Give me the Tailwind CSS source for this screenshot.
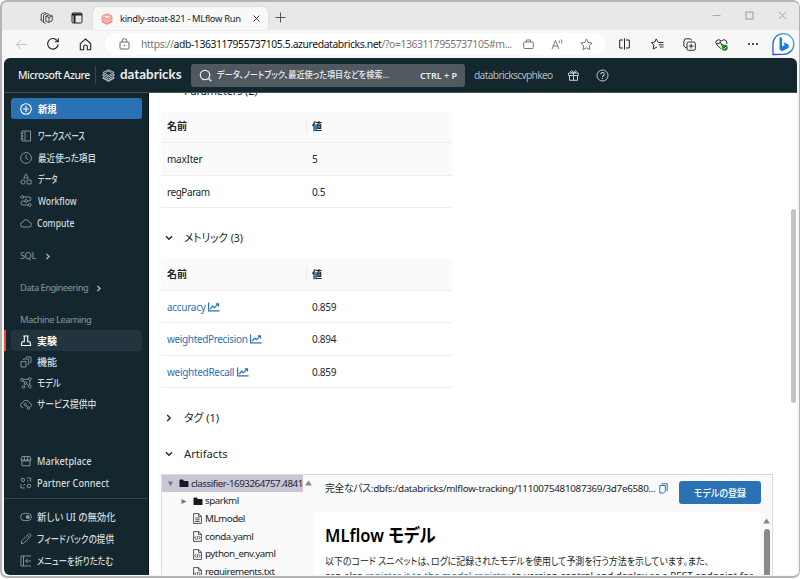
<!DOCTYPE html>
<html lang="ja">
<head>
<meta charset="utf-8">
<title>kindly-stoat-821 - MLflow Run</title>
<script src="https://cdn.jsdelivr.net/npm/@tailwindcss/browser@4"></script>
</head>
<body class="h-[579px] w-[800px] overflow-hidden bg-white font-['Noto_Sans','Noto_Sans_CJK_JP',sans-serif] text-[11px] leading-none text-[#20272b] [font-feature-settings:'palt']">
<svg class="hidden">
  <symbol id="stack" viewBox="0 0 14 14"><path d="M1 3.8 7 .8l6 3-6 3.1zM1 5.5l6 3.1 6-3.1M1 5.5v1.9l6 3.1 6-3.1V5.6M1 9.1l6 3.2 6-3.2M1 9.1v.9l6 3.3 6-3.3v-.9M4 3.8l3-1.5 3 1.5" fill="none" stroke="currentColor" stroke-width=".85"/></symbol>
  <symbol id="chart" viewBox="0 0 12 10"><path d="M.6.5v8.4h11M2.2 7l2.5-2.8 1.8 1.5L10 2.2M7.8 1.8h2.7v2.7" fill="none" stroke="currentColor" stroke-width="1.2"/></symbol>
  <symbol id="down" viewBox="0 0 8 6"><path d="m1 1.2 3 3 3-3" fill="none" stroke="currentColor" stroke-width="1.4"/></symbol>
  <symbol id="right" viewBox="0 0 6 8"><path d="m1.2 1 3 3-3 3" fill="none" stroke="currentColor" stroke-width="1.4"/></symbol>
  <symbol id="folder" viewBox="0 0 10 9"><path d="M.5 1.5q0-.9.9-.9h2.4l1.2 1.3h3.6q.9 0 .9.9v4.4q0 .9-.9.9H1.4q-.9 0-.9-.9z" fill="#171b1e"/></symbol>
  <symbol id="code" viewBox="0 0 9 11"><path d="M.6.6h5.2l2.6 2.6v7.2H.6zM5.6.8v2.6h2.6M3 5.2 1.8 6.8 3 8.4M6 5.2l1.2 1.6L6 8.4M5 4.8 4 8.8" fill="none" stroke="#35393c" stroke-width=".85"/></symbol>
</svg>
<div class="flex h-[578px] w-[800px] flex-col overflow-hidden rounded-[7px] border-2 border-r border-[#b4b4b4] bg-[#f7f7f7]">

  <div class="flex h-[28px] shrink-0 items-end bg-[#e8e8e8]">
    <div class="flex h-[24px] w-[91px] shrink-0 items-center gap-[18px] pl-[38px] text-[#222]">
      <svg class="mt-px size-[13px]" viewBox="0 0 13 13" fill="none" stroke="currentColor" stroke-width=".8"><path d="M5.8 4.3 9 2.8l3.2 1.1v4.8L9 10.4 5.8 9.3zM5.8 4.3 9 5.4l3.2-1.5M9 5.4v5M3.5 9V3.2L6.7 1.6l2 .6M1.2 8V2.3L4.3.7l2 .5M5.8 11.4l-2.3-.9V9M3 9.4 1.2 8.6V7"/></svg>
      <svg class="size-[12px]" viewBox="0 0 12 12" fill="none" stroke="currentColor"><rect x="1" y="1" width="10" height="10" rx="1.3"/><path d="M1 2.5h10M3.5 3v8" stroke-width="2"/></svg>
    </div>
    <div class="flex h-[23px] w-[175px] shrink-0 items-center rounded-t-[5px] bg-[#f8f8f8] pl-[8px] shadow-[0_0_1px_#999]">
      <svg class="size-[12px] shrink-0 text-[#ff5141]"><use href="#stack"/></svg>
      <span class="ml-[7px] text-[9.4px] tracking-[-0.33px] whitespace-nowrap">kindly-stoat-821 - MLflow Run</span>
      <svg class="mr-[7px] ml-auto size-[9px] shrink-0" viewBox="0 0 9 9"><path d="m1.5 1.5 6 6m0-6-6 6" stroke="#222" stroke-width=".9"/></svg>
    </div>
    <svg class="mb-[7px] ml-[7px] size-[11px]" viewBox="0 0 11 11"><path d="M5.5.5v10m-5-5h10" stroke="#444" stroke-width=".9"/></svg>
    <div class="mr-[12px] mb-[10px] ml-auto flex items-center gap-[24px]">
      <svg class="size-[9px]" viewBox="0 0 9 9"><path d="M.5 4.5h8" stroke="#aaa"/></svg>
      <svg class="size-[9px]" viewBox="0 0 9 9"><rect x="1" y="1" width="7" height="7" fill="none" stroke="#999"/></svg>
      <svg class="size-[9px]" viewBox="0 0 9 9"><path d="m1 1 7 7m0-7-7 7" stroke="#999" stroke-width=".9"/></svg>
    </div>
  </div>

  <div class="flex h-[28px] shrink-0 items-center text-[#222] [&_svg]:shrink-0">
    <svg class="ml-[13px] size-[13px]" viewBox="0 0 13 13" fill="none" stroke="#c4c4c4"><path d="M12 6.5H1.5M6 2 1.5 6.5 6 11"/></svg>
    <svg class="ml-[18px] size-[14px]" viewBox="0 0 14 14" fill="none" stroke="currentColor" stroke-width="1.1"><path d="M12.2 7.4A5.3 5.3 0 1 1 10.9 3.3L12.3 4.8M12.3 1.2v3.6H8.8"/></svg>
    <svg class="ml-[19px] size-[13px]" viewBox="0 0 13 13" fill="none" stroke="currentColor" stroke-width="1.1"><path d="M1.3 5.6 6.5 1l5.2 4.6v6.2H8.3V8.3q0-1-1-1H5.7q-1 0-1 1v3.5H1.3z"/></svg>
    <div class="ml-[13px] flex h-[22px] w-[500px] shrink-0 items-center rounded-full bg-white text-[#666]">
      <svg class="ml-[14px] h-[12px] w-[11px]" viewBox="0 0 11 12" fill="none" stroke="currentColor"><rect x="1" y="4" width="9" height="7" rx="1"/><path d="M3.3 4V2.8a2.2 2.2 0 0 1 4.4 0V4"/><circle cx="5.5" cy="7.5" r=".5"/></svg>
      <span class="ml-[11px] w-[373px] shrink-0 text-[10.4px] tracking-[-0.41px] whitespace-nowrap text-[#777]">https://<span class="text-[#151515]">adb-1363117955737105.5.azuredatabricks.net</span>/?o=1363117955737105#m...</span>
      <svg class="ml-[9px] size-[11px]" viewBox="0 0 11 11" fill="none" stroke="currentColor" stroke-width=".9"><rect x=".7" y="3" width="9.6" height="6.5" rx="1"/><path d="M3.4 3V1h4.2v2"/></svg>
      <svg class="ml-[17px] h-[11px] w-[13px]" viewBox="0 0 13 11" fill="none" stroke="currentColor" stroke-width=".9"><path d="m1 10 3.4-8.5L8 10M2.3 7h4.3M8 1.5q1 1 .4 2.5M10 .5q1.8 1.7.5 4"/></svg>
      <svg class="ml-[16px] size-[13px]" viewBox="0 0 13 13" fill="none" stroke="currentColor" stroke-width=".9"><path d="m6.5 1 1.7 3.5 3.9.5-2.8 2.7.6 3.9-3.4-1.8-3.4 1.8.6-3.9L.9 5l3.9-.5z"/></svg>
    </div>
    <svg class="ml-[14px] h-[12px] w-[11px]" viewBox="0 0 11 12" fill="none" stroke="currentColor"><path d="M4 2H.7v8H4M7 2h3.3v8H7M5.5.5v11"/></svg>
    <svg class="ml-[21px] h-[12px] w-[13px]" viewBox="0 0 13 12" fill="none" stroke="currentColor" stroke-width=".95"><path d="M7 4 5.2.9 3.7 4l-3.2.6L2.9 7l-.6 4L6 9M7.3 4.5h5.2M7.8 6.8h4.7M8.8 9h3.7"/></svg>
    <svg class="ml-[19px] size-[13px]" viewBox="0 0 13 13" fill="none" stroke="currentColor" stroke-width=".95"><rect x="4" y="4" width="8.3" height="8.3" rx="1.5"/><path d="M8.1 5.8v4.7M5.8 8.1h4.7M4 9.8H3L.8 8 1 3q0-2.2 2.2-2.2H7l2 1.5"/></svg>
    <svg class="ml-[19px] size-[13px]" viewBox="0 0 13 13" fill="none" stroke="currentColor" stroke-width=".95"><path d="M6.2 11 1.5 6.4Q0 4.3 1.5 2.6 3.8.5 6.3 3q2.5-2.5 4.8-.4 1.4 1.5.3 3.4M1 5.7h3l1.2-2 1.7 3.8L8.2 6"/><circle cx="9.7" cy="9.7" r="3" fill="#17851b" stroke="none"/><path d="m8.3 9.8 1 1L11 9" stroke="#fff" stroke-width=".8"/></svg>
    <svg class="ml-[19px] h-[4px] w-[12px]" viewBox="0 0 12 4"><circle cx="2" cy="2" r=".9"/><circle cx="6" cy="2" r=".9"/><circle cx="10" cy="2" r=".9"/></svg>
    <svg class="ml-[12px] size-[24px]" viewBox="0 0 24 24"><defs><linearGradient id="bl" x1="1" y1="0" x2="0" y2="1"><stop stop-color="#53c2e8"/><stop offset=".5" stop-color="#1979cf"/><stop offset="1" stop-color="#3649d4"/></linearGradient></defs><path d="M2 22.5V12A10.4 10.4 0 1 1 12.5 22.4Z" fill="#fff" stroke="url(#bl)" stroke-width="1.3"/><path d="m8.5 5 2.6 1v8.6l2.6-1.5-1.4-3 4.7 2.1q2 2.6-.4 4.4L11 19.2l-2.5-1.6z" fill="#1b7de0"/></svg>
  </div>

  <div class="ml-[2px] flex h-[517px] w-[793px] shrink-0 flex-col overflow-hidden rounded-[6px] bg-white">
    <header class="flex h-[35px] shrink-0 items-center border-b border-[#465159] bg-[#14262e] text-[#e9edef] [&_svg]:shrink-0">
      <span class="ml-[14px] w-[77px] shrink-0 text-[10.4px] font-medium tracking-[-0.42px] whitespace-nowrap">Microsoft Azure</span>
      <i class="h-[18px] w-px bg-[#34454d]"></i>
      <svg class="ml-[6px] size-[13px]"><use href="#stack"/></svg>
      <span class="ml-[5px] w-[63px] shrink-0 font-['Lato'] text-[13.4px] font-bold">databricks</span>
      <div class="ml-[8px] flex h-[23px] w-[274px] shrink-0 items-center rounded-[3px] bg-[#50595f]">
        <svg class="ml-[8px] size-[13px]" viewBox="0 0 13 13" fill="none" stroke="currentColor" stroke-width="1.3"><circle cx="6" cy="6" r="4.7"/><path d="m9.3 9.3 3 3"/></svg>
        <span class="ml-[5px] inline-block w-[171px] origin-left scale-x-[.855] text-[9.5px] font-medium whitespace-nowrap">データ、ノートブック、最近使った項目などを検索...</span>
        <span class="mr-[8px] ml-auto shrink-0 text-[9px] font-semibold whitespace-nowrap">CTRL + P</span>
      </div>
      <span class="ml-[9px] w-[79px] shrink-0 text-[10.2px] tracking-[-0.65px] whitespace-nowrap text-[#b0bbc1]">databrickscvphkeo</span>
      <svg class="ml-[15px] size-[11px] text-[#c6cfd4]" viewBox="0 0 11 11" fill="none" stroke="currentColor"><path d="M.7 3h9.6v2.5H.7zM1.5 5.5v4.8h8V5.5M5.5 3v7.3M5.5 3C2 3 2.2.7 3.5.7S5.5 3 5.5 3s.8-2.3 2-2.3S9 3 5.5 3"/></svg>
      <svg class="ml-[17px] size-[13px] text-[#c6cfd4]" viewBox="0 0 13 13" fill="none" stroke="currentColor"><circle cx="6.5" cy="6.5" r="5.5"/><path d="M4.8 5.2c0-2.3 3.5-2.2 3.5 0 0 1.4-1.8 1.4-1.8 2.7M6.5 8.8v1.1" stroke-width="1.1"/></svg>
    </header>

    <div class="flex h-[482px]">
      <nav class="flex w-[145px] shrink-0 flex-col border-r border-[#06131a] bg-[#14262e] text-[10px] font-medium whitespace-nowrap text-[#d3dadd] [&_span]:inline-block [&_span]:origin-left [&_svg]:shrink-0">
        <div class="mt-[5px] ml-[7px] flex h-[21px] w-[131px] items-center gap-[6px] rounded-[3px] bg-[#2b72b5] pl-[9px] font-bold text-white">
          <svg class="size-[12px]" viewBox="0 0 12 12" fill="none" stroke="currentColor" stroke-width="1.1"><circle cx="6" cy="6" r="5.3"/><path d="M6 3v6M3 6h6"/></svg><span class="scale-x-[.93]">新規</span></div>
        <div class="mt-[6px] flex h-[22px] items-center gap-[6px] pl-[16px]">
          <svg class="size-[12px] text-[#8e9ba2]" viewBox="0 0 12 12" fill="none" stroke="currentColor" stroke-width=".9"><path d="M2 1h8.5v10H2zM5 1v10M.5 3.2h3M.5 6h3M.5 8.8h3"/></svg><span class="scale-x-[.73]">ワークスペース</span></div>
        <div class="flex h-[22px] items-center gap-[6px] pl-[16px]">
          <svg class="size-[12px] text-[#8e9ba2]" viewBox="0 0 12 12" fill="none" stroke="currentColor" stroke-width=".9"><circle cx="6" cy="6" r="5.4"/><path d="M6 2.7V6l2 2"/></svg><span class="scale-x-[.86]">最近使った項目</span></div>
        <div class="flex h-[21px] items-center gap-[6px] pb-px pl-[16px]">
          <svg class="size-[12px] text-[#8e9ba2]" viewBox="0 0 12 12" fill="none" stroke="currentColor" stroke-width=".9"><path d="M6 .9 8.3 5H3.7zM7 7h4v4H7z"/><circle cx="3" cy="9" r="2.1"/></svg><span class="scale-x-[.7]">データ</span></div>
        <div class="flex h-[22px] items-center gap-[6px] pl-[16px]">
          <svg class="size-[12px] text-[#8e9ba2]" viewBox="0 0 12 12" fill="none" stroke="currentColor" stroke-width=".9"><circle cx="2.3" cy="2" r="1.4"/><circle cx="6" cy="6" r="1.4"/><circle cx="9.6" cy="10" r="1.4"/><path d="M3.7 2h5.2Q11 2 11 4T9 6H7.4M4.6 6H3Q1 6 1 8t2 2h5.2"/></svg><span class="scale-x-[.85]">Workflow</span></div>
        <div class="flex h-[22px] items-center gap-[5px] pl-[16px]">
          <svg class="size-[12px] text-[#8e9ba2]" viewBox="0 0 12 12" fill="none" stroke="currentColor" stroke-width=".9"><path d="M3 10a2.4 2.4 0 0 1-.2-4.8 3.3 3.3 0 0 1 6.4 0A2.4 2.4 0 0 1 9 10z"/></svg><span class="scale-x-[.85]">Compute</span></div>
        <div class="mt-[11px] flex h-[22px] items-center gap-[9px] pl-[16px] text-[9.3px] tracking-[-0.5px] text-[#7d8b92]">SQL<svg class="h-[7px] w-[6px] text-[#b8c2c7]"><use href="#right"/></svg></div>
        <div class="mt-[10px] flex h-[22px] items-center gap-[8px] pl-[16px] text-[9.3px] tracking-[-0.57px] text-[#7d8b92]">Data Engineering<svg class="h-[7px] w-[6px] text-[#b8c2c7]"><use href="#right"/></svg></div>
        <div class="mt-[10px] flex h-[22px] items-center pl-[16px] text-[9.3px] tracking-[-0.54px] text-[#7d8b92]">Machine Learning</div>
        <div class="-mt-px flex h-[21px]"><i class="w-[2px] bg-[#f04b3b]"></i>
          <div class="ml-[5px] flex w-[131px] items-center gap-[5px] rounded-[3px] bg-[#22343d] pl-[9px] font-bold text-white">
          <svg class="size-[12px]" viewBox="0 0 12 12" fill="none" stroke="currentColor" stroke-width="1.1"><path d="M3.3 1h5.4M4.3 1v5.7H2.2L1.4 9V10.5h9.2V9l-.8-2.3H7.7V1"/></svg>実験</div></div>
        <div class="flex h-[21px] items-center gap-[5px] pl-[16px]">
          <svg class="size-[12px] text-[#8e9ba2]" viewBox="0 0 12 12" fill="none" stroke="currentColor" stroke-width=".9"><path d="M1 5.5h5v5.5H1zM3.5 4V3h5.2v5.5H7.5M6 1.5V1h5v5.5h-.8"/></svg>機能</div>
        <div class="flex h-[21px] items-center gap-[5px] pl-[16px]">
          <svg class="size-[12px] text-[#8e9ba2]" viewBox="0 0 12 12" fill="none" stroke="currentColor" stroke-width=".9"><circle cx="2" cy="2.8" r="1.4"/><circle cx="9.7" cy="2" r="1.4"/><circle cx="5.5" cy="6" r="1.3"/><circle cx="3.5" cy="10" r="1.3"/><circle cx="9.8" cy="9.5" r="1.4"/><path d="M3.3 2.6 8.3 2M6.5 6.8l2.2 1.8M5 7.2 4 8.8M3 3.8l1.6 1.4M9.8 3.5v4.6"/></svg><span class="scale-x-[.85]">モデル</span></div>
        <div class="flex h-[21px] items-center gap-[5px] pl-[16px]">
          <svg class="size-[12px] text-[#8e9ba2]" viewBox="0 0 12 12" fill="none" stroke="currentColor" stroke-width=".9"><path d="M3 9.5a2.4 2.4 0 0 1-.2-4.8 3.3 3.3 0 0 1 6.4 0A2.4 2.4 0 0 1 10.5 9"/><circle cx="5.3" cy="6.6" r="1.2"/><circle cx="8.5" cy="10" r="1.3"/><path d="M6.2 7.5 7.6 9"/></svg><span class="scale-x-[.88]">サービス提供中</span></div>
        <div class="mt-[36px] flex h-[22px] items-center gap-[5px] pl-[16px]">
          <svg class="size-[12px] text-[#8e9ba2]" viewBox="0 0 12 12" fill="none" stroke="currentColor" stroke-width=".9"><path d="M2 1.5h8L11 5q-.2 1.3-1.7 1.3T7.6 5Q7.4 6.3 6 6.3T4.4 5q-.2 1.3-1.7 1.3T1 5zM2 6.3v4.5h8V6.3M4.4 1.5V5M7.6 1.5V5M1 5h10"/></svg><span class="scale-x-[.915]">Marketplace</span></div>
        <div class="flex h-[22px] items-center gap-[5px] pl-[16px]">
          <svg class="size-[12px] text-[#8e9ba2]" viewBox="0 0 12 12" fill="none" stroke="currentColor" stroke-width=".9"><circle cx="3" cy="3" r="1.6"/><circle cx="9" cy="9" r="1.8"/><path d="M7 1h3.7v3.7M1 7v4h3.8M1 1h.5M7 4.5l1.5-1M3.5 8.5 5 7"/></svg><span class="scale-x-[.92]">Partner Connect</span></div>
        <div class="mt-[4px] h-px shrink-0 bg-[#34444c]"></div>
        <div class="mt-[7px] flex h-[22px] items-center gap-[5px] pl-[16px]">
          <svg class="size-[12px] text-[#8e9ba2]" viewBox="0 0 12 12" fill="none" stroke="currentColor" stroke-width=".9"><rect x=".6" y="2.4" width="10.8" height="7.2" rx="3.6"/><circle cx="7.7" cy="6" r="1.6" fill="currentColor"/></svg><span class="scale-x-[.94]">新しい UI の無効化</span></div>
        <div class="flex h-[22px] items-center gap-[5px] pl-[16px]">
          <svg class="size-[12px] text-[#8e9ba2]" viewBox="0 0 12 12" fill="none" stroke="currentColor" stroke-width=".9"><path d="m1.3 10.7.4-2.8 6.8-6.7q1-.6 1.8.2.9.9.2 1.9L3.9 10.2zM7.4 2.4l2.1 2.1"/></svg><span class="scale-x-[.86]">フィードバックの提供</span></div>
        <div class="flex h-[22px] items-center gap-[5px] pl-[16px]">
          <svg class="size-[12px] text-[#8e9ba2]" viewBox="0 0 12 12" fill="none" stroke="currentColor" stroke-width=".9"><path d="M11 1H1v10h10M3.5 1v10M11 6H5.5M7.8 3.8 5.5 6l2.3 2.2"/></svg><span class="scale-x-[.825]">メニューを折りたたむ</span></div>
      </nav>

      <main class="flex w-[642px] shrink-0 flex-col overflow-hidden bg-white pl-[12px]">
        <div class="h-[18px] shrink-0 overflow-hidden pl-[23px] text-[11px] tracking-[-0.15px]"><div class="-mt-[8px]">Parameters (2)</div></div>
        <div class="w-[291px] shrink-0 text-[10px] tracking-[-0.35px]">
          <div class="flex h-[32px] items-center rounded-t-[3px] border-b border-[#ededed] bg-[#fafafa] pb-px font-bold tracking-normal"><span class="w-[145px] pl-[6px]">名前</span><span class="flex h-[16px] items-center border-l border-[#e9e9e9] pl-[5px]">値</span></div>
          <div class="flex h-[33px] items-center border-b border-[#ededed] bg-[#fafafa]"><span class="w-[151px] pl-[6px] tracking-[-0.25px]">maxIter</span>5</div>
          <div class="flex h-[32px] items-center border-b border-[#ededed]"><span class="w-[151px] pl-[6px] tracking-[-0.45px]">regParam</span>0.5</div>
        </div>
        <div class="mt-[19px] flex h-[22px] shrink-0 items-center pl-[4px] text-[11.5px]"><svg class="mr-[11px] h-[6px] w-[8px]"><use href="#down"/></svg><span class="inline-block origin-left scale-x-[.92]">メトリック (3)</span></div>
        <div class="mt-[9px] w-[291px] shrink-0 text-[10px] tracking-[-0.3px] [&_svg]:ml-[3px] [&_svg]:h-[10px] [&_svg]:w-[12px]">
          <div class="flex h-[33px] items-center rounded-t-[3px] border-b border-[#ededed] bg-[#fafafa] font-bold tracking-normal"><span class="w-[145px] pl-[6px]">名前</span><span class="flex h-[16px] items-center border-l border-[#e9e9e9] pl-[5px]">値</span></div>
          <div class="flex h-[32px] items-center border-b border-[#ededed]"><span class="flex w-[151px] items-center pl-[6px] text-[#2b72b5]">accuracy<svg><use href="#chart"/></svg></span>0.859</div>
          <div class="flex h-[33px] items-center border-b border-[#ededed]"><span class="flex w-[151px] items-center pl-[6px] tracking-[-0.35px] text-[#2b72b5]">weightedPrecision<svg><use href="#chart"/></svg></span>0.894</div>
          <div class="flex h-[32px] items-center border-b border-[#ededed]"><span class="flex w-[151px] items-center pl-[6px] text-[#2b72b5]">weightedRecall<svg><use href="#chart"/></svg></span>0.859</div>
        </div>
        <div class="mt-[19px] flex h-[22px] shrink-0 items-center pl-[5px] text-[11.5px]"><svg class="mr-[12px] h-[8px] w-[6px]"><use href="#right"/></svg><span class="inline-block origin-left scale-x-[.95]">タグ (1)</span></div>
        <div class="mt-[14px] flex h-[22px] shrink-0 items-center pl-[4px] text-[11.2px]"><svg class="mr-[11px] h-[6px] w-[8px]"><use href="#down"/></svg>Artifacts</div>
        <div class="mt-[9px] flex h-[120px] w-[612px] shrink-0 border border-[#d8dadc] bg-[#fafafa]">
          <div class="w-[141px] shrink-0 overflow-hidden text-[9.8px] tracking-[-0.48px] whitespace-nowrap [&_svg]:shrink-0">
            <div class="flex h-[17px] items-center bg-[#cbc6d6] pl-[6px]"><svg class="h-[6px] w-[5px]" viewBox="0 0 5 6"><path d="M0 .5h5L2.5 5.5z" fill="#777"/></svg><svg class="mr-[2px] ml-[6px] h-[9px] w-[10px] shrink-0"><use href="#folder"/></svg>classifier-1693264757.4841</div>
            <div class="flex h-[18px] items-center pl-[19px]"><svg class="h-[5px] w-[6px]" viewBox="0 0 6 5"><path d="M.5 0v5l5-2.5z" fill="#777"/></svg><svg class="mr-[2px] ml-[6px] h-[9px] w-[10px]"><use href="#folder"/></svg>sparkml</div>
            <div class="flex h-[17px] items-center pl-[31px]"><svg class="mr-[3px] h-[11px] w-[9px]" viewBox="0 0 9 11"><path d="M.6.6h5.2l2.6 2.6v7.2H.6zM5.6.8v2.6h2.6M2.3 5h4.4M2.3 6.8h4.4M2.3 8.5h4.4" fill="none" stroke="#35393c" stroke-width=".85"/></svg>MLmodel</div>
            <div class="mt-px flex h-[17px] items-center pl-[31px]"><svg class="mr-[3px] h-[11px] w-[9px]"><use href="#code"/></svg>conda.yaml</div>
            <div class="flex h-[18px] items-center pl-[31px]"><svg class="mr-[3px] h-[11px] w-[9px]"><use href="#code"/></svg>python_env.yaml</div>
            <div class="flex h-[18px] items-center pl-[31px]"><svg class="mr-[3px] h-[11px] w-[9px]"><use href="#code"/></svg>requirements.txt</div>
          </div>
          <div class="w-[11px] shrink-0 pt-[5px] pl-[2px]"><svg class="h-[6px] w-[7px]" viewBox="0 0 7 6"><path d="M3.5.5 7 5.5H0z" fill="#888"/></svg></div>
          <div class="flex w-[458px] shrink-0 flex-col">
            <div class="flex h-[38px] shrink-0 pl-[11px] [&_svg]:shrink-0">
              <span class="mt-[9px] w-[332px] shrink-0 text-[9.8px] tracking-[-0.28px] whitespace-nowrap">完全なパス:dbfs:/databricks/mlflow-tracking/1110075481087369/3d7e6580...</span>
              <svg class="mt-[8px] ml-[2px] h-[11px] w-[9px]" viewBox="0 0 9 11" fill="none" stroke="#2b72b5"><path d="M2.5.8h5.7v7.4M.8 2.5h5.5v5.8L4.5 10H.8z"/></svg>
              <span class="mt-[6px] mr-[11px] ml-auto flex h-[23px] w-[82px] shrink-0 items-center justify-center rounded-[3px] bg-[#2b72b5] text-[10px] font-medium text-white"><span class="inline-block scale-x-[.9]">モデルの登録</span></span>
            </div>
            <div class="flex h-[80px] bg-white">
              <div class="w-[447px] shrink-0 pl-[11px] whitespace-nowrap [&>div]:w-max [&>div]:origin-left">
                <div class="mt-[13px] scale-x-[.895] text-[18.5px] font-semibold text-black">MLflow モデル</div>
                <div class="mt-[9px] scale-x-[.912] text-[9.8px] leading-[15px]">以下のコード スニペットは、ログに記録されたモデルを使用して予測を行う方法を示しています。また、</div>
                <div class="text-[9.8px] leading-[14px] tracking-[0.02px]">can also <span class="text-[#2b72b5]">register it to the model registry</span> to version control and deploy as a REST endpoint for</div>
              </div>
              <div class="flex w-[11px] shrink-0 flex-col items-center bg-[#fafafa] pt-[5px]"><svg class="h-[6px] w-[7px] shrink-0" viewBox="0 0 7 6"><path d="M3.5.5 7 5.5H0z" fill="#888"/></svg><i class="mt-[5px] h-[80px] w-[6px] shrink-0 rounded-full bg-[#888b8d]"></i></div>
            </div>
          </div>
        </div>
      </main>
      <div class="w-[6px] bg-white pt-[116px]"><div class="h-[194px] w-[5px] rounded-full bg-[#c0c4c7]"></div></div>
    </div>
  </div>
</div>
</body>
</html>
